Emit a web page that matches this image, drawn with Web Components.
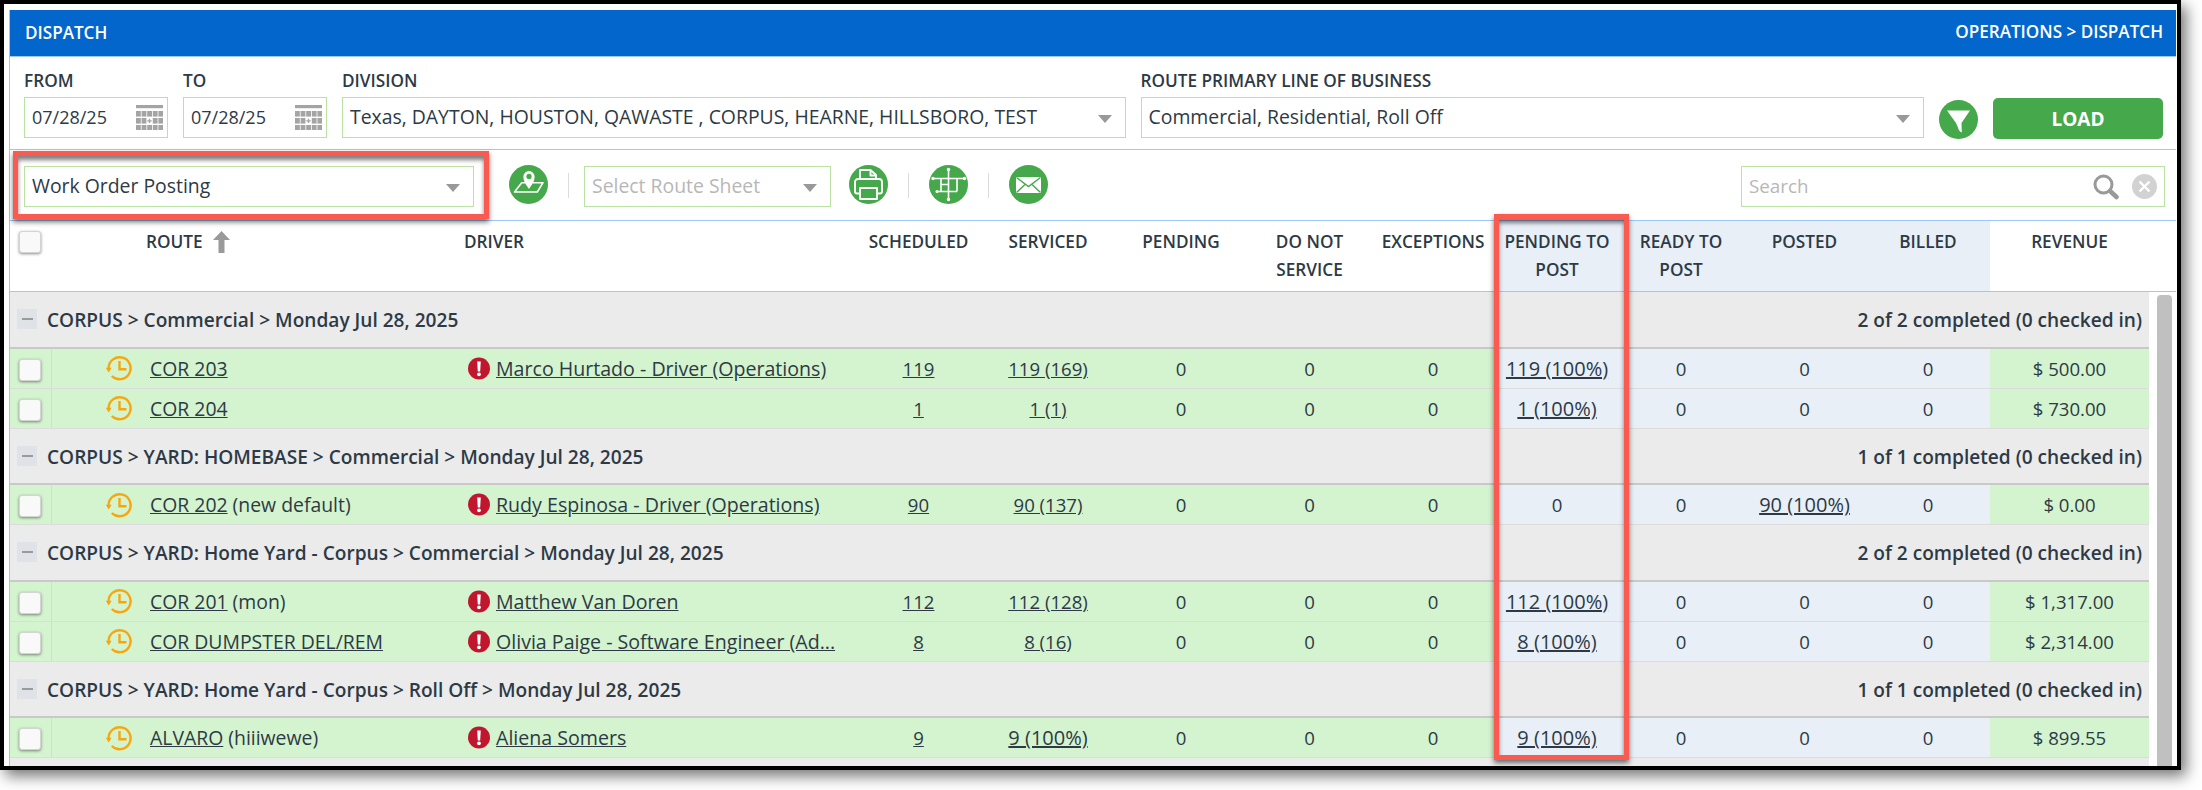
<!DOCTYPE html>
<html lang="en">
  <head>
    <meta charset="UTF-8" />
    <title>Dispatch</title>
    <style>
      html, body { margin: 0; padding: 0; background: #fff; }
      body { width: 2202px; height: 790px; overflow: hidden; font-family: "Open Sans", "Noto Sans", sans-serif; color: #2d3a45; }
    </style>
  </head>
  <body>
    <dispatch-page>
      <title-bar slot="title" crumb="OPERATIONS &gt; DISPATCH">DISPATCH</title-bar>

      <filter-bar slot="filters">
        <field-box label="FROM" kind="date" style="width:144px">07/28/25</field-box>
        <field-box label="TO" kind="date" style="width:144px">07/28/25</field-box>
        <field-box label="DIVISION" kind="select" style="flex:1">Texas, DAYTON, HOUSTON, QAWASTE , CORPUS, HEARNE, HILLSBORO, TEST</field-box>
        <field-box label="ROUTE PRIMARY LINE OF BUSINESS" kind="select" style="flex:1">Commercial, Residential, Roll Off</field-box>
        <icon-button icon="filter"></icon-button>
        <load-button>LOAD</load-button>
      </filter-bar>

      <tool-bar slot="tools">
        <field-box kind="select" style="width:450px">Work Order Posting</field-box>
        <icon-button icon="map" style="margin-left:35px"></icon-button>
        <tool-sep style="margin:7px 15px 0 20px"></tool-sep>
        <field-box kind="select" placeholder style="width:247px">Select Route Sheet</field-box>
        <icon-button icon="print" style="margin-left:18px"></icon-button>
        <tool-sep style="margin:7px 20px 0 20px"></tool-sep>
        <icon-button icon="tree"></icon-button>
        <tool-sep style="margin:7px 20px 0 20px"></tool-sep>
        <icon-button icon="mail"></icon-button>
        <search-box style="margin-left:auto">Search</search-box>
      </tool-bar>

      <route-table slot="table">
        <table-head slot="head"></table-head>

        <group-row done="2 of 2 completed (0 checked in)">CORPUS &gt; Commercial &gt; Monday Jul 28, 2025</group-row>
        <route-row route="COR 203" driver="Marco Hurtado - Driver (Operations)" values="119|119 (169)|0|0|0|119 (100%)|0|0|0|$ 500.00"></route-row>
        <route-row route="COR 204" values="1|1 (1)|0|0|0|1 (100%)|0|0|0|$ 730.00"></route-row>

        <group-row done="1 of 1 completed (0 checked in)">CORPUS &gt; YARD: HOMEBASE &gt; Commercial &gt; Monday Jul 28, 2025</group-row>
        <route-row route="COR 202" note="(new default)" driver="Rudy Espinosa - Driver (Operations)" values="90|90 (137)|0|0|0|0|0|90 (100%)|0|$ 0.00"></route-row>

        <group-row done="2 of 2 completed (0 checked in)">CORPUS &gt; YARD: Home Yard - Corpus &gt; Commercial &gt; Monday Jul 28, 2025</group-row>
        <route-row route="COR 201" note="(mon)" driver="Matthew Van Doren" values="112|112 (128)|0|0|0|112 (100%)|0|0|0|$ 1,317.00"></route-row>
        <route-row route="COR DUMPSTER DEL/REM" driver="Olivia Paige - Software Engineer (Ad..." values="8|8 (16)|0|0|0|8 (100%)|0|0|0|$ 2,314.00"></route-row>

        <group-row done="1 of 1 completed (0 checked in)">CORPUS &gt; YARD: Home Yard - Corpus &gt; Roll Off &gt; Monday Jul 28, 2025</group-row>
        <route-row route="ALVARO" note="(hiiiwewe)" driver="Aliena Somers" values="9|9 (100%)|0|0|0|9 (100%)|0|0|0|$ 899.55"></route-row>

        <group-row></group-row>
      </route-table>

      <!-- the two red callouts lie over the page -->
      <call-out slot="overlay" style="left:13px;top:151px;width:476px;height:68px"></call-out>
      <call-out slot="overlay" style="left:1494px;top:214px;width:135px;height:546px"></call-out>
    </dispatch-page>

    <script>
      // Small helper so every element gets an open shadow root with its own styles
      class Base extends HTMLElement {
        constructor() {
          super();
          this.attachShadow({ mode: "open" });
        }
        connectedCallback() {
          this.shadowRoot.innerHTML = this.render();
        }
      }

      const GREEN = "#45a84b";
      const ICONS = {
        filter: `<path d="M8 10.500H31L22.500 23l.3 9.500c-2-.8-3.500-3-4-5.500L17 23z" fill="#fff"/>`,
        map: `<path d="M16.500 17.700H12.700L5.500 27h22.800l5.700-9.300H23.500" fill="none" stroke="#fff" stroke-width="1.600" stroke-linejoin="round"/>
            <path d="M20 24c-3.200-4.600-5.600-7.700-5.600-12.400a5.600 5.600 0 0 1 11.200 0c0 4.700-2.400 7.800-5.600 12.400z" fill="#fff"/>
            <circle cx="20" cy="11.400" r="2.600" fill="${GREEN}"/>`,
        print: `<g fill="none" stroke="#fff" stroke-width="1.900" stroke-linejoin="round">
            <path d="M11 14V5h10.500l5.500 5v4"/><path d="M21.500 5v5.500H27"/>
            <path d="M10 28.500H8c-1.200 0-2-.8-2-2V17c0-1.700 1.300-3 3-3h21c1.700 0 3 1.300 3 3v9.500c0 1.200-.8 2-2 2h-2"/>
            <rect x="11" y="23" width="17" height="11"/></g>`,
        tree: `<g fill="none" stroke="#fff" stroke-width="1.600">
            <path d="M19.500 4v31M4 13.500h31.500M12 13.500v13M28 13.500v13M8 26.500h20M12 19.500h7.500"/></g>
            <g fill="#fff"><circle cx="19.500" cy="4.500" r="1.700"/><circle cx="19.500" cy="34.500" r="1.700"/>
            <circle cx="4" cy="13.500" r="1.700"/><circle cx="35.500" cy="13.500" r="1.700"/><circle cx="8" cy="26.500" r="1.500"/></g>`,
        mail: `<rect x="7" y="12" width="25" height="16" fill="#fff"/>
            <path d="M7.500 12.500l12 9 12-9M7.500 27.500l8.500-8M31.500 27.500l-8.500-8" fill="none" stroke="${GREEN}" stroke-width="1.400"/>`,
      };

      class DispatchPage extends Base {
        render() {
          return `<style>
            :host { display: block; width: 2181px; height: 770px; box-sizing: border-box; position: relative;
              border: 4px solid #000; padding: 6px 1px 0 5px; background: #fff;
              box-shadow: 5px 6px 14px rgba(0,0,0,.55); }
            .panel { height: 100%; overflow: hidden; border-left: 1px solid #9ec8f5; display: flex; flex-direction: column; }
            .over { position: absolute; left: -4px; top: -4px; }
          </style>
          <div class="panel">
            <slot name="title"></slot><slot name="filters"></slot><slot name="tools"></slot><slot name="table"></slot>
          </div>
          <div class="over"><slot name="overlay"></slot></div>`;
        }
      }

      class TitleBar extends Base {
        render() {
          return `<style>
            :host { display: flex; flex: none; height: 46px; box-sizing: border-box; background: #0366cd; color: #fff;
              justify-content: space-between; padding: 0 13px 0 15px; font-size: 17.100px; font-weight: 600; }
            div { height: 42px; display: flex; align-items: center; }
            .a { height: 41px; padding-top: 2px; }
          </style><div class="a"><slot></slot></div><div>${this.getAttribute("crumb").replace(">", "&gt;")}</div>`;
        }
      }

      class FilterBar extends Base {
        render() {
          return `<style>
            :host { display: flex; flex: none; align-items: flex-end; gap: 15px; height: 94px; box-sizing: border-box;
              padding: 15px 13px 10px 14px; border-top: 1px solid #9ec8f5; border-bottom: 1px solid #9ec8f5; }
          </style><slot></slot>`;
        }
      }

      class ToolBar extends Base {
        render() {
          return `<style>
            :host { display: flex; flex: none; align-items: flex-start; height: 71px; box-sizing: border-box;
              padding: 16px 11px 0 14px; border-bottom: 1px solid #9ec8f5; }
          </style><slot></slot>`;
        }
      }

      class ToolSep extends Base {
        render() {
          return `<style>:host { display: block; flex: none; width: 1px; height: 25px; background: #dcdcdc; }</style>`;
        }
      }

      const CALENDAR = (() => {
        let cells = "";
        for (let r = 0; r < 3; r++) {
          for (let c = 0; c < 5; c++) {
            if (r === 1 && c === 2) continue;
            cells += `<rect x="${c * 5.6}" y="${6 + r * 7}" width="4.800" height="5.600"/>`;
          }
        }
        return `<svg width="27" height="25" viewBox="0 0 27 25" fill="#a4a4a4"><rect width="27" height="3.200"/>${cells}<path d="M11.300 15.200h4.400v1.400h-4.400zM12.800 13.700h1.400v4.400h-1.400z"/></svg>`;
      })();

      class FieldBox extends Base {
        render() {
          const label = this.getAttribute("label");
          const kind = this.getAttribute("kind");
          const right = kind === "date" ? CALENDAR : `<i></i>`;
          return `<style>
            :host { display: block; min-width: 0; margin-bottom: 1px; }
            label { display: block; font-size: 17.200px; font-weight: 600; line-height: 20px; margin-bottom: 6px; white-space: nowrap; }
            .box { display: flex; align-items: center; height: 41px; box-sizing: border-box; border: 1px solid #b9e2a3;
              padding: 0 ${kind === "date" ? 4 : 13}px 0 7px; background: #fff; font-size: ${kind === "date" ? 18 : 19.4}px; }
            span { flex: 1; white-space: nowrap; overflow: hidden; padding-bottom: 2px; ${this.hasAttribute("placeholder") ? "color:#b7b7b7;" : ""} }
            i { width: 0; height: 0; border-left: 7px solid transparent; border-right: 7px solid transparent; border-top: 8px solid #999; margin-top: 2px; }
          </style>${label ? `<label>${label}</label>` : ""}<div class="box"><span><slot></slot></span>${right}</div>`;
        }
      }

      class IconButton extends Base {
        render() {
          return `<style>
            :host { display: block; flex: none; width: 39px; height: 39px; margin-top: -1px; }
            svg { display: block; }
          </style><svg width="39" height="39" viewBox="0 0 39 39"><circle cx="19.500" cy="19.500" r="19.500" fill="${GREEN}"/>${ICONS[this.getAttribute("icon")]}</svg>`;
        }
      }

      class LoadButton extends Base {
        render() {
          return `<style>
            :host { display: flex; flex: none; width: 170px; height: 41px; align-items: center; justify-content: center;
              background: ${GREEN}; color: #fff; border-radius: 5px; font-size: 19px; font-weight: 700; }
          </style><slot></slot>`;
        }
      }

      class SearchBox extends Base {
        render() {
          return `<style>
            :host { display: flex; flex: none; width: 424px; height: 41px; box-sizing: border-box; align-items: center;
              border: 1px solid #b9e2a3; padding: 0 7px; font-size: 18.800px; color: #b7b7b7; }
            span { flex: 1; padding-bottom: 2px; }
            svg { display: block; }
          </style><span><slot></slot></span>
          <svg width="26" height="26" viewBox="0 0 26 26" style="margin-right:13px"><circle cx="10.500" cy="10.500" r="8.500" fill="none" stroke="#999" stroke-width="3"/><path d="M17 17l6.500 6" stroke="#999" stroke-width="4.500" stroke-linecap="round"/></svg>
          <svg width="25" height="25" viewBox="0 0 25 25"><circle cx="12.500" cy="12.500" r="12.500" fill="#d2d2d2"/><path d="M7.500 7.500l10 10M17.500 7.500l-10 10" stroke="#fff" stroke-width="2.400"/></svg>`;
        }
      }

      class RouteTable extends Base {
        render() {
          return `<style>
            :host { display: flex; flex: 1; min-height: 0; flex-direction: column;
              --cols: 42px 412px 391px 127px 132px 134px 123px 124px 124px 124px 123px 124px 159px; }
            .body { display: flex; flex: 1; min-height: 0; }
            .rows { width: 2139px; flex: none; }
            .bar { width: 15px; margin-left: 8px; margin-top: 3px; background: #c0c0c0; border-radius: 4px 4px 0 0; }
          </style><slot name="head"></slot><div class="body"><div class="rows"><slot></slot></div><div class="bar"></div></div>`;
        }
      }

      const BOX = `width:22px;height:22px;box-sizing:border-box;background:#f9f9f9;border:1px solid #d4d4d4;border-radius:3px;box-shadow:0 1px 3px rgba(0,0,0,.45);`;

      class TableHead extends Base {
        render() {
          const cols = [["SCHEDULED"], ["SERVICED"], ["PENDING"], ["DO NOT", "SERVICE"], ["EXCEPTIONS"],
            ["PENDING TO", "POST", 1], ["READY TO", "POST", 1], ["POSTED", "", 1], ["BILLED", "", 1], ["REVENUE"]];
          const cells = cols.map(([a, b, tint]) => `<div class="c${tint ? " t" : ""}">${a}${b ? `<br>${b}` : ""}</div>`).join("");
          return `<style>
            :host { display: block; flex: none; height: 71px; box-sizing: border-box; border-bottom: 1px solid #9ec8f5;
              font-size: 17.200px; font-weight: 600; line-height: 28px; }
            .g { display: grid; grid-template-columns: var(--cols); width: 2139px; height: 70px; }
            .c { text-align: center; padding-top: 7px; white-space: nowrap; }
            .t { background: #e8eff7; }
            .chk { padding: 10px 0 0 9px; }
            .chk div { ${BOX} }
            .r { padding: 7px 0 0 94px; display: flex; gap: 10px; }
            .r svg { margin-top: 3px; }
            .d { padding-top: 7px; }
          </style><div class="g"><div class="chk"><div></div></div>
            <div class="r">ROUTE<svg width="17" height="22" viewBox="0 0 17 22"><path d="M8.500 0L17 9h-5.500v13h-6V9H0z" fill="#9a9a9a"/></svg></div>
            <div class="d">DRIVER</div>${cells}</div>`;
        }
      }

      class GroupRow extends Base {
        render() {
          const done = this.getAttribute("done");
          return `<style>
            :host { display: flex; align-items: center; height: 56.500px; box-sizing: border-box; padding: 0 7px 0 7px;
              background: #ebebeb; border-bottom: 2px solid #c9c9c9; font-size: 19.100px; font-weight: 600; white-space: nowrap; }
            b { width: 20px; height: 20px; background: #dfe3e7; margin-right: 10px; display: flex; align-items: center; justify-content: center; }
            b::after { content: ""; width: 11px; height: 2px; background: #9a9a9a; }
            span, div { padding-top: 2px; }
            span { flex: 1; }
          </style>${done ? `<b></b><span><slot></slot></span><div>${done}</div>` : ""}`;
        }
      }

      class RouteRow extends Base {
        render() {
          const route = this.getAttribute("route");
          const note = this.getAttribute("note");
          const driver = this.getAttribute("driver");
          const cells = this.getAttribute("values").split("|").map((v, i) => {
            const linked = i < 2 || /\(/.test(v);
            const tint = i >= 5 && i <= 8;
            const wide = /%/.test(v) ? " p" : "";
            return `<div class="n${tint ? " t" : ""}${wide}">${linked ? `<u>${v}</u>` : v}</div>`;
          }).join("");
          return `<style>
            :host { display: grid; grid-template-columns: var(--cols); height: 40px; box-sizing: border-box;
              background: #d4f3cf; border-bottom: 1px solid #dcdcdc; font-size: 19.400px; white-space: nowrap; }
            .chk { padding: 10px 0 0 9px; border-right: 1px solid #c8e6c4; }
            .chk div { ${BOX} }
            .route { display: flex; align-items: center; padding-left: 54px; gap: 18px; }
            .driver { display: flex; align-items: center; gap: 6px; padding-left: 4px; min-width: 0; font-size: 19.600px; }
            .n { display: flex; align-items: center; justify-content: center; font-size: 18.600px; }
            .p { font-size: 20px; }
            .t { background: #e8eff7; }
            svg { display: block; flex: none; }
          </style>
          <div class="chk"><div></div></div>
          <div class="route">
            <svg width="26" height="26" viewBox="0 0 26 26" fill="none" stroke="#f8a60e" stroke-width="2.400"><path d="M2.600 13A11 11 0 1 1 5.800 21"/><path d="M13.500 6v8.200h7"/><path d="M-.2 12.800h5.800L2.700 17.400z" fill="#f8a60e" stroke="none"/></svg>
            <div><u>${route}</u>${note ? ` ${note}` : ""}</div>
          </div>
          <div class="driver">${driver ? `<svg width="22" height="23" viewBox="0 0 22 23"><circle cx="11" cy="11.500" r="11" fill="#c0172f"/><path d="M9.200 4.500h3.600l-.6 10h-2.400z" fill="#fff"/><circle cx="11" cy="17.300" r="1.900" fill="#fff"/></svg><div><u>${driver}</u></div>` : ""}</div>
          ${cells}`;
        }
      }

      class CallOut extends Base {
        render() {
          return `<style>
            :host { display: block; position: absolute; box-sizing: border-box; border: 5px solid #fa5a4f; pointer-events: none;
              box-shadow: 0 3px 5px rgba(0,0,0,.55), inset 0 4px 4px rgba(0,0,0,.5); }
          </style>`;
        }
      }

      customElements.define("dispatch-page", DispatchPage);
      customElements.define("title-bar", TitleBar);
      customElements.define("filter-bar", FilterBar);
      customElements.define("tool-bar", ToolBar);
      customElements.define("tool-sep", ToolSep);
      customElements.define("field-box", FieldBox);
      customElements.define("icon-button", IconButton);
      customElements.define("load-button", LoadButton);
      customElements.define("search-box", SearchBox);
      customElements.define("route-table", RouteTable);
      customElements.define("table-head", TableHead);
      customElements.define("group-row", GroupRow);
      customElements.define("route-row", RouteRow);
      customElements.define("call-out", CallOut);
    </script>
  </body>
</html>
